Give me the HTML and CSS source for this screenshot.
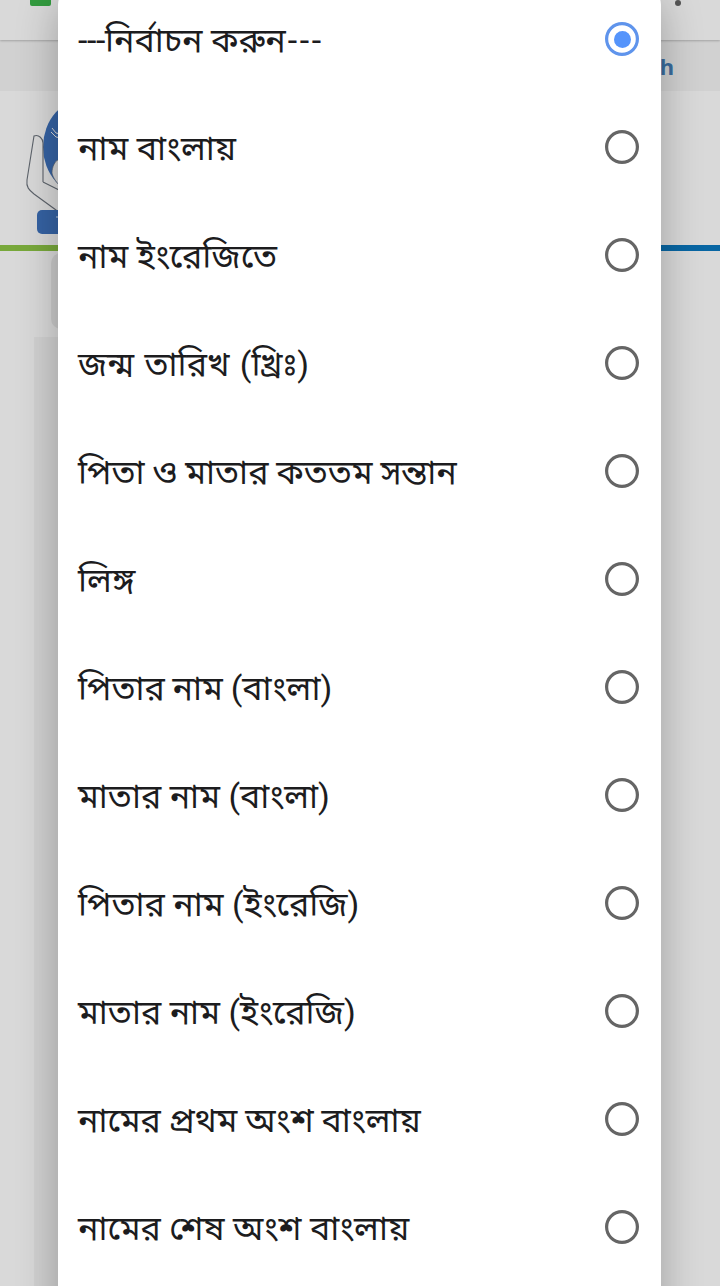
FILE: index.html
```html
<!DOCTYPE html>
<html lang="bn">
<head>
<meta charset="utf-8">
<title>নির্বাচন করুন</title>
<link rel="stylesheet" href="styles.css">
</head>
<body>
<div class="page">
  <header class="browser-bar">
    <span class="site-badge"></span>
    <span class="menu-dot"></span>
  </header>
  <nav class="language-bar"><span>h</span></nav>
  <div class="brand">
    <svg class="logo" width="120" height="154" viewBox="0 0 120 154">
      <ellipse cx="87" cy="56" rx="44" ry="49" fill="#3562a3"/>
      <path d="M52 37l4 5 5 1M51 41l5 5 5 1" fill="none" stroke="#d8d8d8" stroke-width="1"/>
      <path d="M61 96c-4-4-8-9-9-14 0-6 3-12 6-13h8v27z" fill="#d4d4d4" stroke="#555b61" stroke-width=".6"/>
      <path d="M43 91V52c0-4-4-9-9-7L27 89c-1 7 2 10 7 14l22 16 8 5M43 91l20 10" fill="none" stroke="#5d636b" stroke-width="1.1"/>
      <rect x="37" y="119" width="75" height="24" rx="5" fill="#3562a3"/>
      <path d="M56 126h5" stroke="#becbdc" stroke-width="1"/>
    </svg>
  </div>
  <div class="stripe"></div>
  <main class="content">
    <div class="tab"></div>
    <div class="panel"></div>
  </main>
</div>
<div class="dialog" role="listbox">
  <div class="option"><span class="label"><span class="dashes">---</span>নির্বাচন করুন<span class="dashes-end">---</span></span><i class="radio checked"></i></div>
  <div class="option"><span class="label">নাম বাংলায়</span><i class="radio"></i></div>
  <div class="option"><span class="label">নাম ইংরেজিতে</span><i class="radio"></i></div>
  <div class="option"><span class="label loose">জন্ম তারিখ (খ্রিঃ)</span><i class="radio"></i></div>
  <div class="option"><span class="label tight">পিতা ও মাতার কততম সন্তান</span><i class="radio"></i></div>
  <div class="option"><span class="label">লিঙ্গ</span><i class="radio"></i></div>
  <div class="option"><span class="label tight">পিতার নাম (বাংলা)</span><i class="radio"></i></div>
  <div class="option"><span class="label">মাতার নাম (বাংলা)</span><i class="radio"></i></div>
  <div class="option"><span class="label">পিতার নাম (ইংরেজি)</span><i class="radio"></i></div>
  <div class="option"><span class="label">মাতার নাম (ইংরেজি)</span><i class="radio"></i></div>
  <div class="option"><span class="label tight">নামের প্রথম অংশ বাংলায়</span><i class="radio"></i></div>
  <div class="option"><span class="label">নামের শেষ অংশ বাংলায়</span><i class="radio"></i></div>
</div>
</body>
</html>
```
FILE: styles.css
```css
* { box-sizing: border-box; }
body {
  margin: 0;
  height: 1286px;
  position: relative;
  overflow: hidden;
  background: #d9d9d9;
  font-family: "Noto Sans", sans-serif;
}
.page { display: flex; flex-direction: column; height: 1286px; }
.browser-bar {
  flex: none;
  display: flex;
  justify-content: space-between;
  height: 40px;
  padding: 0 39px 0 30px;
  background: #d9d9d9;
  box-shadow: 0 1px 2px rgba(0, 0, 0, .22);
  position: relative;
}
.site-badge { width: 21px; height: 6px; border-radius: 0 0 2px 2px; background: #339b3f; }
.menu-dot { width: 6px; height: 6px; border-radius: 50%; background: #555; }
.language-bar {
  flex: none;
  display: flex;
  justify-content: flex-end;
  align-items: center;
  height: 51px;
  padding-right: 46px;
  background: #d1d1d1;
  color: #3a6c9e;
  font: bold 22px "Noto Sans", sans-serif;
}
.brand { flex: none; height: 154px; }
.logo { display: block; }
.stripe {
  flex: none;
  height: 6px;
  background: linear-gradient(90deg, #78a83b 50%, #0866a3 50%);
}
.content { flex: 1; display: flex; flex-direction: column; padding-left: 34px; }
.tab { width: 300px; height: 76px; margin: 2px 0 8px 17px; border-radius: 10px; background: #cacaca; }
.panel { flex: 1; width: 600px; background: #d1d1d1; }
.dialog {
  position: absolute;
  top: -15px;
  left: 58px;
  width: 603px;
  height: 1340px;
  border-radius: 20px;
  background: #fff;
  box-shadow: 0 14px 42px rgba(0, 0, 0, .28);
}
.option {
  display: flex;
  align-items: center;
  justify-content: space-between;
  height: 108px;
  padding: 0 22px 0 20px;
  color: #1c1c1e;
}
.label {
  padding-top: 2px;
  font-family: Roboto, "Noto Sans Bengali", sans-serif;
  font-weight: 400;
  font-size: 34px;
  line-height: 50px;
  white-space: nowrap;
}
.loose { word-spacing: 2px; }
.tight { word-spacing: -.6px; }
.dashes { letter-spacing: -.4px; }
.dashes-end { padding-left: 2px; letter-spacing: 2.6px; }
.radio {
  display: flex;
  align-items: center;
  justify-content: center;
  width: 34px;
  height: 34px;
  border-radius: 50%;
  box-shadow: inset 0 0 0 3.2px #656565;
}
.checked { box-shadow: inset 0 0 0 3.2px #5f94ec; }
.checked::after { content: ""; width: 17px; height: 17px; border-radius: 50%; background: #5594fb; }
```
